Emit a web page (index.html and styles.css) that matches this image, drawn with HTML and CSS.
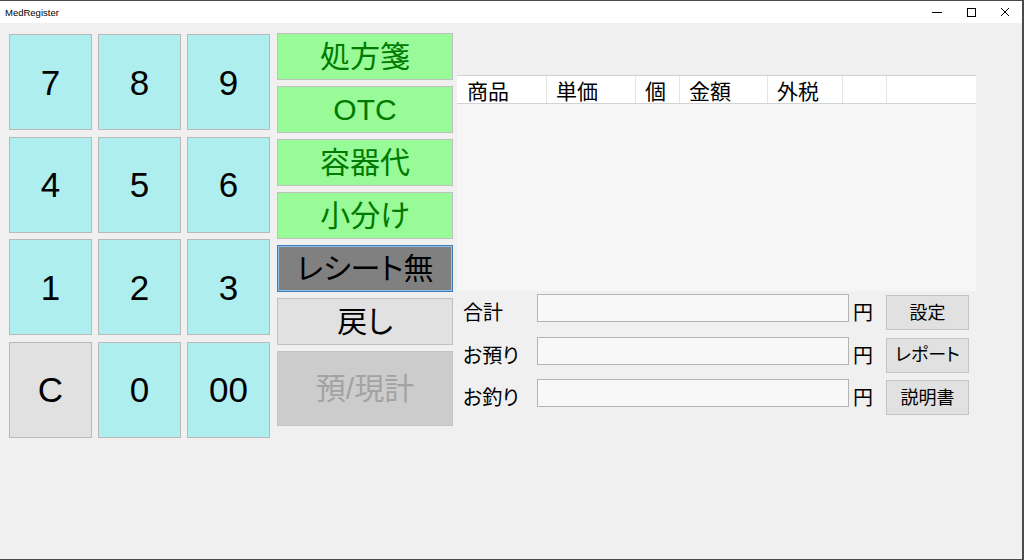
FILE: index.html
```html
<!DOCTYPE html>
<html>
<head>
	<meta charset="UTF-8">
	<link rel="stylesheet" href="styles.css">
</head>
<body>
	<div class="window">
		<div class="titlebar">
			<span class="title">MedRegister</span>
			<div class="controls">
				<span class="ctl"><svg width="10" height="10" viewBox="0 0 10 10"><path d="M0 5.5h10" stroke="#000" stroke-width="1"/></svg></span>
				<span class="ctl"><svg width="10" height="10" viewBox="0 0 10 10"><rect x="1.5" y="1.5" width="8" height="8" fill="none" stroke="#000" stroke-width="1"/></svg></span>
				<span class="ctl"><svg width="10" height="10" viewBox="0 0 10 10"><path d="M1 1L9 9M9 1L1 9" stroke="#000" stroke-width="1"/></svg></span>
			</div>
		</div>
		<div class="main">
			<div class="keypad">
				<button class="key">7</button>
				<button class="key">8</button>
				<button class="key">9</button>
				<button class="key">4</button>
				<button class="key">5</button>
				<button class="key">6</button>
				<button class="key">1</button>
				<button class="key">2</button>
				<button class="key">3</button>
				<button class="key key-clear">C</button>
				<button class="key">0</button>
				<button class="key">00</button>
			</div>
			<div class="actions">
				<button class="act act-green">処方箋</button>
				<button class="act act-green">OTC</button>
				<button class="act act-green">容器代</button>
				<button class="act act-green">小分け</button>
				<button class="act act-receipt">レシート無</button>
				<button class="act act-back">戻し</button>
				<button class="act act-total" disabled>預/現計</button>
			</div>
			<div class="panel">
				<div class="list">
					<div class="list-head">
						<span class="col col-name">商品</span>
						<span class="col col-price">単価</span>
						<span class="col col-qty">個</span>
						<span class="col col-amount">金額</span>
						<span class="col col-tax">外税</span>
						<span class="col col-extra"></span>
						<span class="col col-rest"></span>
					</div>
					<div class="list-body"></div>
				</div>
				<div class="form">
					<div class="row">
						<span class="label">合計</span>
						<input class="field" type="text" readonly>
						<span class="yen">円</span>
						<button class="side-btn">設定</button>
					</div>
					<div class="row">
						<span class="label">お預り</span>
						<input class="field" type="text" readonly>
						<span class="yen">円</span>
						<button class="side-btn">レポート</button>
					</div>
					<div class="row">
						<span class="label">お釣り</span>
						<input class="field" type="text" readonly>
						<span class="yen">円</span>
						<button class="side-btn">説明書</button>
					</div>
				</div>
			</div>
		</div>
	</div>
</body>
</html>
```

FILE: styles.css
```css
* {
	box-sizing: border-box;
}

body {
	margin: 0;
	background: #f0f0f0;
	font-family: "Liberation Sans", "Noto Sans CJK JP", sans-serif;
	font-feature-settings: "palt";
	color: #000;
}

button {
	font-family: inherit;
	font-feature-settings: "palt";
	color: #000;
	padding: 0;
	line-height: 1;
	cursor: pointer;
	outline: none;
}

.window {
	width: 1024px;
	height: 560px;
	border-top: 1px solid #4a4a4a;
	border-right: 2px solid #4a4a4a;
	border-bottom: 1px solid #4a4a4a;
	display: flex;
	flex-direction: column;
}

/* title bar */
.titlebar {
	height: 22px;
	background: #fff;
	display: flex;
	align-items: center;
	justify-content: space-between;
}

.title {
	font-size: 9.5px;
	padding-left: 5px;
}

.controls {
	display: flex;
	height: 22px;
}

.ctl {
	width: 34px;
	display: flex;
	align-items: center;
	justify-content: center;
}

/* main area */
.main {
	display: flex;
	align-items: flex-start;
	padding: 10px 0 0 9px;
}

.keypad {
	display: grid;
	grid-template-columns: repeat(3, 83px);
	grid-template-rows: repeat(4, 96px);
	column-gap: 6px;
	row-gap: 6.5px;
	margin-top: 1px;
}

.key {
	background: #afeeee;
	border: 1px solid #b9b9b9;
	font-size: 35px;
}

.key-clear {
	background: #e1e1e1;
}

.actions {
	display: flex;
	flex-direction: column;
	gap: 6px;
	width: 176px;
	margin-left: 7px;
}

.act {
	height: 47px;
	font-size: 30px;
	border: 1px solid #c0c0c0;
}

.act-green {
	background: #98fb98;
	color: #007a00;
}

.act-receipt {
	background: #808080;
	border: 1px solid #3d7ab3;
	box-shadow: inset 0 0 0 1px #8ec0ea;
}

.act-back {
	background: #e1e1e1;
}

.act-total {
	height: 75px;
	background: #cccccc;
	border-color: #c4c4c4;
	color: #a3a3a3;
	cursor: default;
}

/* list + totals */
.panel {
	width: 519px;
	margin-left: 4px;
	display: flex;
	flex-direction: column;
}

.list {
	margin-top: 42px;
}

.list-head {
	display: flex;
	height: 29px;
	background: #fff;
	border-top: 1px solid #d2d2d2;
	border-bottom: 1px solid #d2d2d2;
}

.col {
	display: flex;
	align-items: center;
	padding-left: 9px;
	font-size: 21px;
	border-right: 1px solid #e5e5e5;
	font-feature-settings: normal;
}

.col-name { width: 90px; padding-left: 10px; }
.col-price { width: 89px; }
.col-qty { width: 44px; }
.col-amount { width: 88px; }
.col-tax { width: 75px; }
.col-extra { width: 44px; }
.col-rest { flex: 1; border-right: none; }

.list-body {
	height: 187px;
	background: #f6f6f6;
}

.form {
	display: flex;
	flex-direction: column;
	gap: 6.5px;
	margin-top: 3px;
}

.row {
	display: flex;
	align-items: flex-start;
	height: 36px;
}

.label {
	width: 80px;
	padding-left: 6px;
	margin-top: 5px;
	font-size: 20px;
	line-height: 28px;
}

.field {
	width: 312px;
	height: 28px;
	margin: 0;
	border: 1px solid #b4b4b4;
	background: #f8f8f8;
	outline: none;
}

.yen {
	width: 37px;
	padding-left: 4px;
	margin-top: 5px;
	font-size: 20px;
	line-height: 28px;
}

.side-btn {
	width: 83px;
	height: 35px;
	margin-top: 1px;
	font-size: 18px;
	background: #e1e1e1;
	border: 1px solid #c4c4c4;
}
```
